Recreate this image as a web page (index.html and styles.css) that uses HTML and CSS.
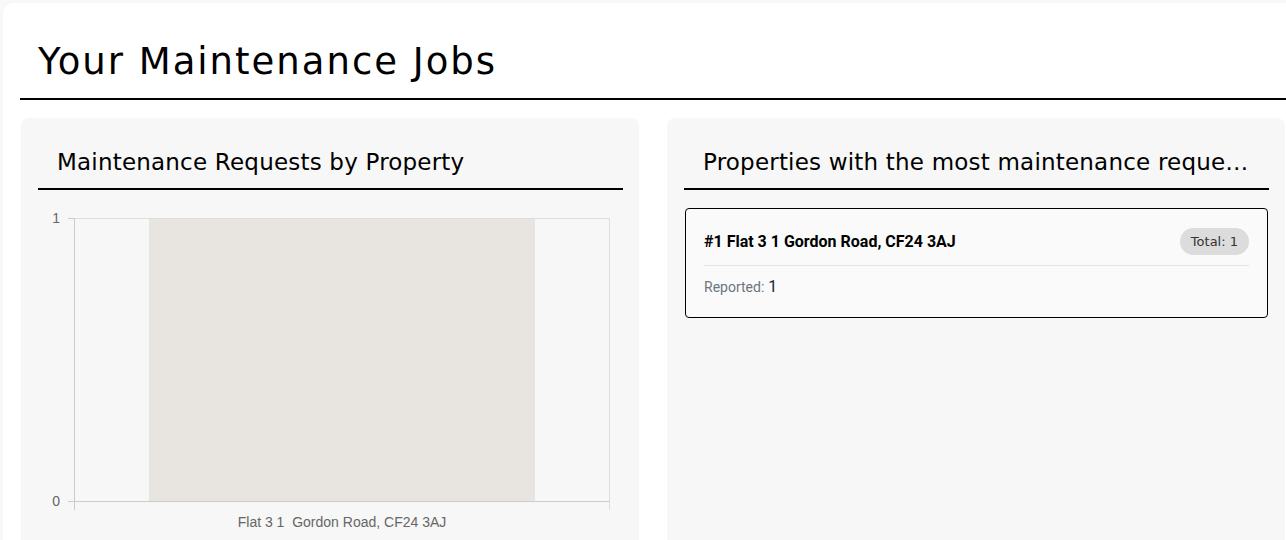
FILE: index.html
```html
<!DOCTYPE html>
<html lang="en">
<head>
<meta charset="utf-8">
<title>Your Maintenance Jobs</title>
<link rel="stylesheet" href="styles.css">
</head>
<body>
<main class="page">
  <h1 class="page-title">Your Maintenance Jobs</h1>
  <div class="panels">
    <section class="panel">
      <h2 class="panel-title">Maintenance Requests by Property</h2>
      <div class="chart">
        <svg class="chart-svg" width="585" height="340" viewBox="0 0 585 340">
          <line x1="36" y1="18.5" x2="572" y2="18.5" stroke="#dddddd" stroke-width="1"/>
          <line x1="30" y1="18.5" x2="36" y2="18.5" stroke="#cccccc" stroke-width="1"/>
          <line x1="30" y1="301.5" x2="36" y2="301.5" stroke="#cccccc" stroke-width="1"/>
          <rect x="111" y="19" width="386" height="282" fill="#e8e5e1"/>
          <line x1="571.5" y1="18" x2="571.5" y2="310" stroke="#dddddd" stroke-width="1"/>
          <line x1="36.5" y1="18" x2="36.5" y2="310" stroke="#cccccc" stroke-width="1"/>
          <line x1="36" y1="301.5" x2="572" y2="301.5" stroke="#cccccc" stroke-width="1"/>
          <text x="22" y="23" class="axis-label" text-anchor="end">1</text>
          <text x="22" y="306" class="axis-label" text-anchor="end">0</text>
          <text x="304" y="327" class="axis-label" text-anchor="middle" xml:space="preserve">Flat 3 1  Gordon Road, CF24 3AJ</text>
        </svg>
      </div>
    </section>
    <section class="panel">
      <h2 class="panel-title">Properties with the most maintenance requests</h2>
      <div class="rank-card">
        <div class="rank-head">
          <span class="rank-name">#1 Flat 3 1 Gordon Road, CF24 3AJ</span>
          <span class="pill">Total: 1</span>
        </div>
        <div class="rank-body">
          <span class="stat-label">Reported:</span> <span class="stat-value">1</span>
        </div>
      </div>
    </section>
  </div>
</main>
</body>
</html>
```
FILE: styles.css
```css
html, body {
  margin: 0;
  padding: 0;
}
body {
  background: #f8f8f8;
  overflow: hidden;
  width: 1286px;
  height: 540px;
}
.page {
  margin: 3px 0 0 3px;
  width: 1320px;
  min-height: 600px;
  background: #ffffff;
  border-radius: 10px;
  padding: 0 0 0 17px;
  box-sizing: border-box;
  font-family: "DejaVu Sans", sans-serif;
}
.page-title {
  margin: 0;
  padding: 37px 0 0 18px;
  width: 1266px;
  height: 97px;
  box-sizing: border-box;
  border-bottom: 2px solid #000;
  font-family: "DejaVu Sans", sans-serif;
  font-weight: 400;
  font-size: 37px;
  letter-spacing: 2px;
  line-height: 44px;
  color: #000;
}
.panels {
  display: grid;
  grid-template-columns: 618px 618px;
  column-gap: 28px;
  margin: 18px 0 0 1px;
}
.panel {
  background: #f7f7f7;
  border-radius: 8px;
  padding: 0 16px 0 17px;
  min-height: 440px;
}
.panel-title {
  margin: 0;
  padding: 30px 18px 0 19px;
  height: 72px;
  box-sizing: border-box;
  border-bottom: 2px solid #000;
  font-family: "DejaVu Sans", sans-serif;
  font-weight: 400;
  font-size: 23px;
  letter-spacing: 0.2px;
  line-height: 28px;
  color: #000;
  white-space: nowrap;
  overflow: hidden;
  text-overflow: ellipsis;
}
.chart {
  padding-top: 10px;
}
.chart-svg {
  display: block;
}
.axis-label {
  font-family: "Liberation Sans", Arial, sans-serif;
  font-size: 14px;
  fill: #666666;
}
.rank-card {
  margin: 18px 1px 0 1px;
  border: 1px solid #000;
  border-radius: 4px;
  background: #fafafa;
  padding: 19px 18px 0 18px;
  height: 110px;
  box-sizing: border-box;
  font-family: Roboto, sans-serif;
}
.rank-head {
  display: flex;
  justify-content: space-between;
  align-items: center;
  padding-bottom: 10px;
  border-bottom: 1px solid #e4e4e4;
}
.rank-name {
  font-weight: 700;
  font-size: 16px;
  color: #000;
}
.pill {
  background: #dcdcdc;
  border-radius: 14px;
  height: 27px;
  line-height: 27px;
  padding: 0 11px;
  font-family: "DejaVu Sans", sans-serif;
  font-size: 13px;
  color: #333;
}
.rank-body {
  padding-top: 11px;
  line-height: 20px;
}
.stat-label {
  font-size: 14px;
  color: #6c757d;
}
.stat-value {
  font-size: 16px;
  color: #1b1b3a;
}
```
